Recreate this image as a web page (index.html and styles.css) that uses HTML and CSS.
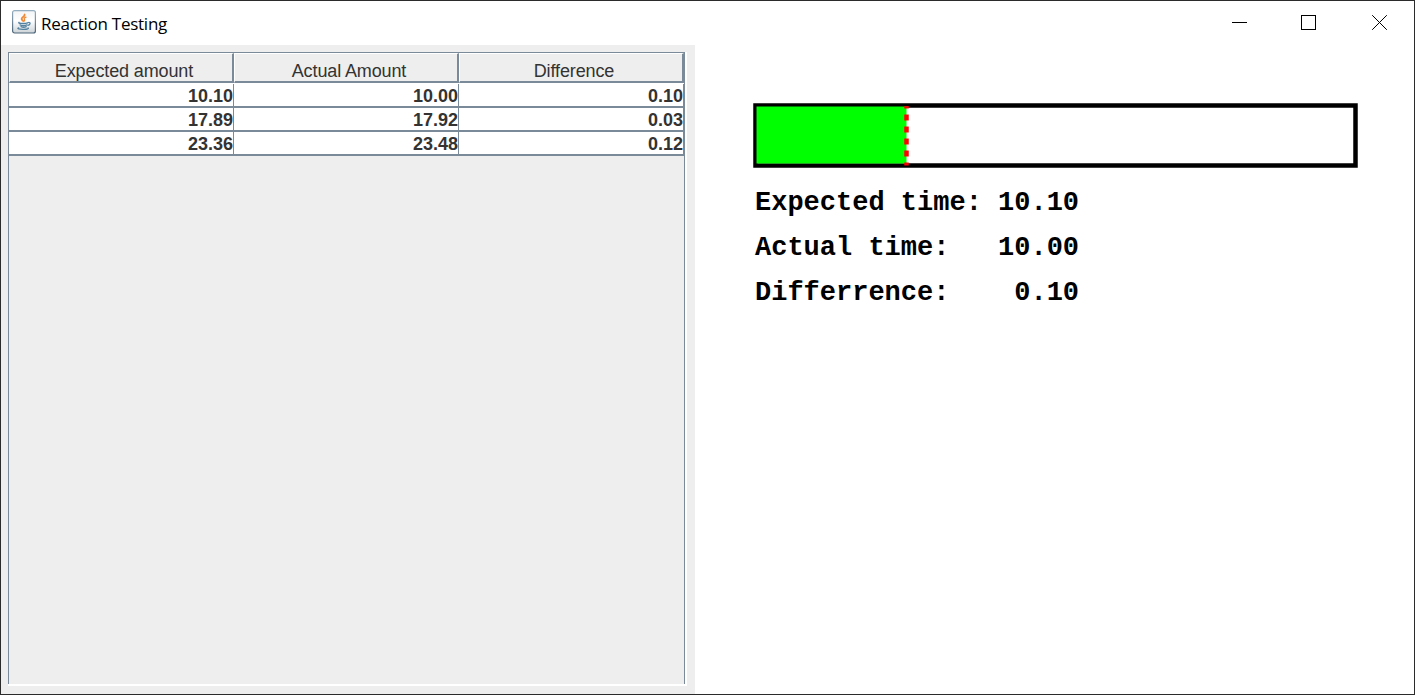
FILE: index.html
```html
<!DOCTYPE html>
<html lang="en">
<head>
<meta charset="utf-8">
<title>Reaction Testing</title>
<link rel="stylesheet" href="styles.css">
</head>
<body>
<div class="window">
  <header class="titlebar">
    <svg class="app-icon" width="24" height="24" viewBox="0 0 24 24">
      <defs>
        <linearGradient id="face" x1="0" y1="0" x2="0" y2="1">
          <stop offset="0" stop-color="#f3f4f5"/><stop offset=".45" stop-color="#fff"/><stop offset="1" stop-color="#cdd3d8"/>
        </linearGradient>
        <linearGradient id="edge" x1="0" y1="0" x2="0" y2="1">
          <stop offset="0" stop-color="#94aebf"/><stop offset="1" stop-color="#4b6478"/>
        </linearGradient>
      </defs>
      <rect x=".6" y=".6" width="22.8" height="22.4" rx="2" fill="url(#face)" stroke="url(#edge)" stroke-width="1.2"/>
      <g fill="none" stroke-linecap="round">
        <path d="M12.600 4.500c.8 2-3.400 2.900-3 4.600.3 1 1.200 1.400 1.600 2" stroke="#ee8a35" stroke-width="1.800"/>
        <path d="M14 7.200c-1.800.7-2.400 1.400-1.500 2.200.5.600.2 1.100-.3 1.600" stroke="#ee8a35" stroke-width="1.300"/>
        <path d="M6.900 12.400c-.6.800 1.400 1 4.200 1 1.900 0 3.400-.2 4.600-.600M8.100 14.900c1.500.8 5.200.8 6.800 0M9 16.700c1.300.6 4 .6 5.200 0" stroke="#5382a1" stroke-width="1.400"/>
        <path d="M16.500 12.500c2.300-.3 2.100 2.100-.6 2.900M6.700 17.800c-2.600.8.800 1.700 4.900 1.600 3.900-.1 5.700-.8 4.500-1.500" stroke="#5382a1" stroke-width="1.200"/>
      </g>
    </svg>
    <h1 class="title">Reaction Testing</h1>
    <svg class="controls" width="160" height="16" viewBox="0 0 160 16" fill="none" stroke="#000">
      <path d="M0 7.500H15"/>
      <rect x="69.500" y=".5" width="14" height="14"/>
      <path d="M140.200 .2L154.800 14.800M154.800 .2L140.200 14.800"/>
    </svg>
  </header>
  <main class="content">
    <section class="results">
      <div class="scroll">
        <div class="view">
          <div class="row head"><div class="th">Expected amount</div><div class="th">Actual Amount</div><div class="th">Difference</div></div>
          <div class="row"><div class="td">10.10</div><div class="td">10.00</div><div class="td">0.10</div></div>
          <div class="row"><div class="td">17.89</div><div class="td">17.92</div><div class="td">0.03</div></div>
          <div class="row"><div class="td">23.36</div><div class="td">23.48</div><div class="td">0.12</div></div>
        </div>
      </div>
    </section>
    <section class="test">
      <svg class="bar" width="606" height="66" viewBox="752 102 606 66">
        <rect x="755.5" y="105.5" width="600" height="60" fill="#fff" stroke="#000" stroke-width="4.5"/>
        <rect x="756.500" y="106.500" width="150" height="57" fill="#0f0"/>
        <path d="M906.500 106V108.500M906.500 114.500v6M906.500 126.500v6M906.500 138.500v6M906.500 150.500v6M906.500 162.500v3" stroke="#f00" stroke-width="4.500"/>
      </svg>
      <pre class="readout">Expected time: 10.10
Actual time:   10.00
Differrence:    0.10</pre>
    </section>
  </main>
</div>
</body>
</html>
```

FILE: styles.css
```css
* { box-sizing: border-box; }
body { margin: 0; background: #fff; }
.window {
  width: 1415px;
  height: 695px;
  border: 1px solid #2b2b2b;
  display: flex;
  flex-direction: column;
  font-family: "Liberation Sans", Arial, sans-serif;
}
.titlebar {
  height: 44px;
  display: flex;
  align-items: flex-start;
  padding: 9px 22px 0 11px;
}
.title {
  margin: 0 auto 0 5px;
  font: 400 17px/28px "Open Sans", "Noto Sans", sans-serif;
  letter-spacing: -0.25px;
  color: #000;
}
.controls { margin-top: 5px; }
.content { flex: 1; display: flex; }
.results {
  width: 694px;
  background: #eee;
  padding: 7px 8px 8px 7px;
}
.scroll {
  height: 634px;
  border-right: 2px solid #fff;
  border-bottom: 2px solid #fff;
}
.view {
  height: 632px;
  border: 1px solid #7a8a99;
  border-bottom: 0;
}
.row { display: grid; grid-template-columns: repeat(3, 225px); }
.th {
  height: 30px;
  padding-left: 6px;
  border-top: 1px solid #fff;
  border-left: 1px solid #fff;
  border-right: 2px solid #7a8a99;
  border-bottom: 2px solid #7a8a99;
  text-align: center;
  font-size: 18px;
  letter-spacing: -0.12px;
  line-height: 34px;
  color: #333;
}
.head { border-bottom: 1px solid #fff; }
.td {
  height: 24px;
  background: #fff;
  border-right: 1px solid #7a8a99;
  border-bottom: 2px solid #7a8a99;
  text-align: right;
  font-size: 18px;
  font-weight: 700;
  line-height: 24px;
  color: #333;
}
.test { flex: 1; padding: 57px 0 0 57px; }
.bar { display: block; }
.readout {
  margin: 13px 0 0 3px;
  font: 700 27px/45px "Liberation Mono", "Courier New", monospace;
  color: #000;
}
```
